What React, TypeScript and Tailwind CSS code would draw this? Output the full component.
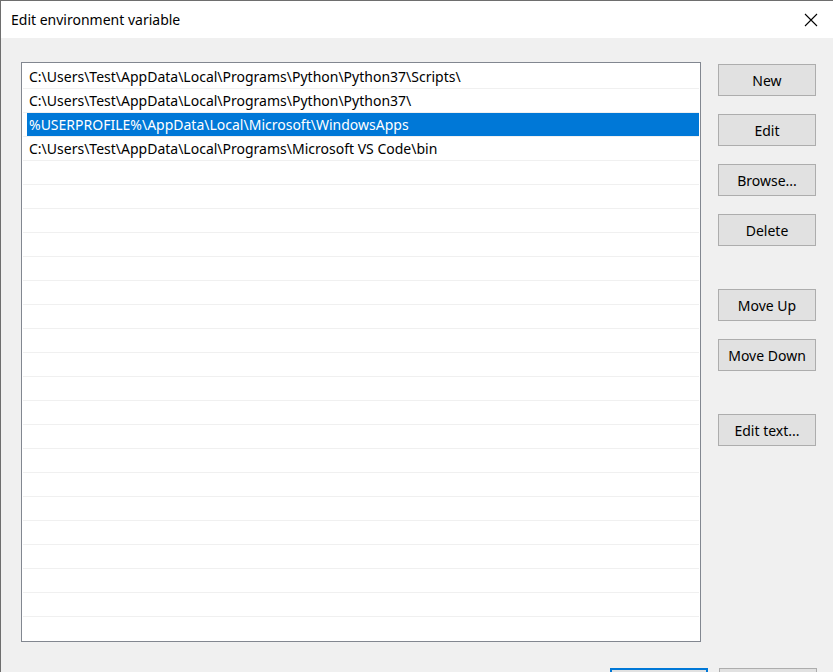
import React from 'react';

const FONT = { fontFamily: '"Noto Sans", "Open Sans", sans-serif' };

function Btn({ label, primary }: { label: string; primary?: boolean }) {
  return (
    <button
      className={
        'w-[98px] h-[32px] shrink-0 bg-[#e1e1e1] text-[14px] text-black ' +
        (primary ? 'border-2 border-[#0078d7]' : 'border border-[#adadad]')
      }
      style={FONT}
    >
      {label}
    </button>
  );
}

export default function App() {
  const paths = [
    'C:\\Users\\Test\\AppData\\Local\\Programs\\Python\\Python37\\Scripts\\',
    'C:\\Users\\Test\\AppData\\Local\\Programs\\Python\\Python37\\',
    '%USERPROFILE%\\AppData\\Local\\Microsoft\\WindowsApps',
    'C:\\Users\\Test\\AppData\\Local\\Programs\\Microsoft VS Code\\bin',
  ];
  const rows = [...paths, ...Array(20).fill('')];

  return (
    <div
      className="w-[833px] h-[672px] overflow-hidden flex flex-col border-t border-l border-[#6e6e6e] bg-[#f0f0f0]"
      style={FONT}
    >
      {/* title bar */}
      <div className="h-[37px] shrink-0 bg-white flex items-center justify-between pl-[10px] pr-[14px]">
        <span className="text-[14px] text-black">Edit environment variable</span>
        <svg width="14" height="14" viewBox="0 0 14 14" className="mr-[1px]">
          <path d="M1 1 L13 13 M13 1 L1 13" stroke="#000" strokeWidth="1.1" />
        </svg>
      </div>

      {/* body */}
      <div className="flex-1 pl-[20px] pt-[24px]">
        <div className="flex gap-[17px]">
          <div className="w-[680px] h-[580px] shrink-0 bg-white border border-[#828790] pt-[2px] pl-[1px] pr-[1px] overflow-hidden">
            {rows.map((r, i) => (
              <div
                key={i}
                className={
                  'h-[24px] flex items-center ' +
                  (i === rows.length - 1 ? '' : 'border-b border-[#f0f0f0]')
                }
              >
                <div
                  className={
                    'h-full flex items-center ml-[4px] flex-1 pl-[2px] text-[14px] ' +
                    (i === 2 ? 'bg-[#0078d7] text-white' : 'text-black')
                  }
                >
                  {r}
                </div>
              </div>
            ))}
          </div>

          <div className="flex flex-col pt-[2px]">
            <Btn label="New" />
            <div className="h-[18px]" />
            <Btn label="Edit" />
            <div className="h-[18px]" />
            <Btn label="Browse..." />
            <div className="h-[18px]" />
            <Btn label="Delete" />
            <div className="h-[43px]" />
            <Btn label="Move Up" />
            <div className="h-[18px]" />
            <Btn label="Move Down" />
            <div className="h-[43px]" />
            <Btn label="Edit text..." />
          </div>
        </div>

        <div className="flex justify-end gap-[11px] pr-[16px] mt-[26px]">
          <Btn label="OK" primary />
          <Btn label="Cancel" />
        </div>
      </div>
    </div>
  );
}
